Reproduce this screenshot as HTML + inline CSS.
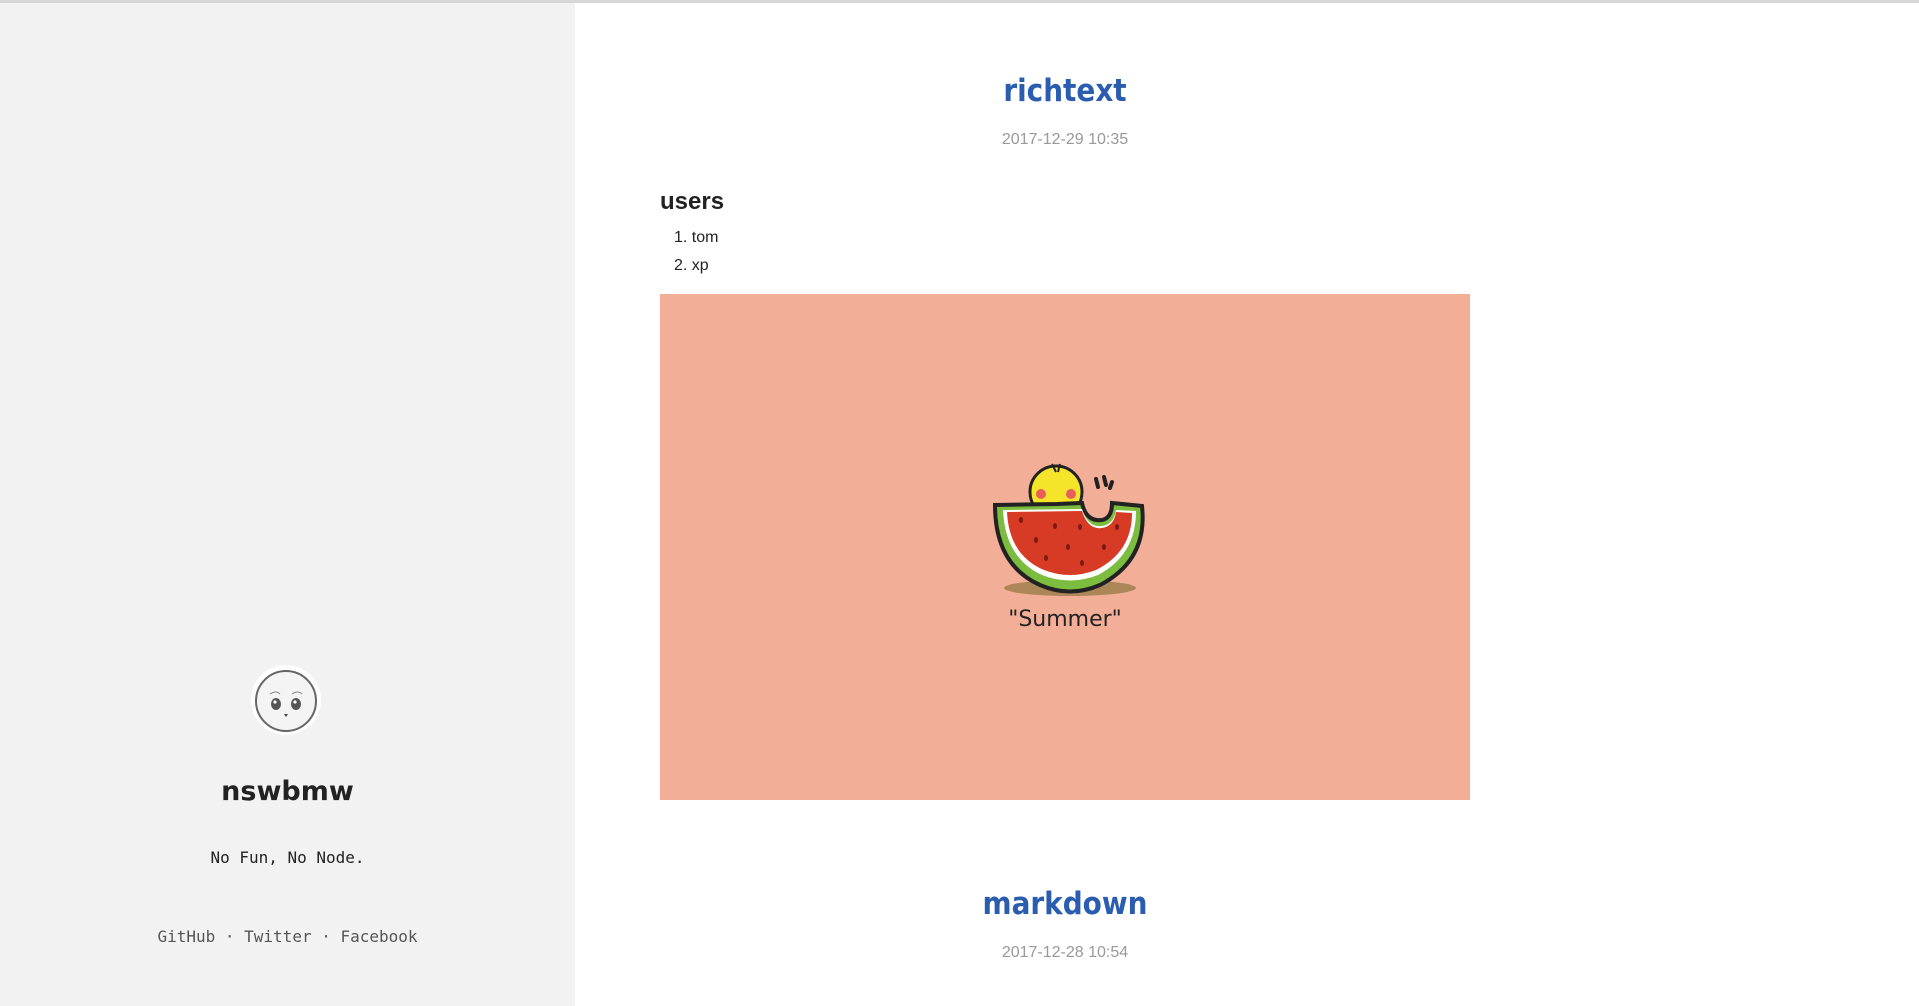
<!DOCTYPE html>
<html><head><meta charset="utf-8"><style>
html,body{margin:0;padding:0;width:1919px;height:1006px;overflow:hidden;background:#fff;font-family:"Liberation Sans",sans-serif}
.top{position:absolute;left:0;top:0;width:1919px;height:3px;background:#d6d6d6}
.side{position:absolute;left:0;top:3px;width:575px;height:1003px;background:#f2f2f2}
.c{position:absolute;left:0;width:575px;text-align:center}
.mono{font-family:"DejaVu Sans Mono","Liberation Mono",monospace}
.t{position:absolute;left:660px;width:810px;text-align:center}
a{color:#2a5db0;text-decoration:none}
</style></head><body>
<div class="top"></div>
<div class="side">
 <svg style="position:absolute;left:250px;top:661px" width="72" height="72" viewBox="0 0 72 72">
  <circle cx="36" cy="36" r="35" fill="#fff"/>
  <circle cx="36" cy="37" r="30" fill="#f4f4f4" stroke="#666" stroke-width="2"/>
  <ellipse cx="26" cy="40" rx="5" ry="6" fill="#555"/><ellipse cx="46" cy="40" rx="5" ry="6" fill="#555"/>
  <circle cx="25" cy="38" r="1.6" fill="#fff"/><circle cx="45" cy="38" r="1.6" fill="#fff"/>
  <path d="M34 50 L38 50 L36 53Z" fill="#444"/>
  <path d="M20 30 q6-4 10 0 M42 30 q6-4 10 0" stroke="#888" fill="none"/>
 </svg>
 <div class="c" style="top:773px;font-size:27px;font-weight:bold;color:#222;font-family:'DejaVu Sans',sans-serif">nswbmw</div>
 <div class="c mono" style="top:845px;font-size:16px;color:#222">No Fun, No Node.</div>
 <div class="c mono" style="top:924px;font-size:16px;color:#555">GitHub · Twitter · Facebook</div>
</div>
<div class="t" style="top:73px;font-size:31px;font-weight:bold;font-family:'DejaVu Sans Condensed','DejaVu Sans',sans-serif"><a>richtext</a></div>
<div class="t" style="top:131px;font-size:16px;color:#999">2017-12-29 10:35</div>
<div style="position:absolute;left:660px;top:188px;font-size:24px;font-weight:bold;color:#222">users</div>
<div style="position:absolute;left:674px;top:224px;font-size:16px;color:#222;line-height:28px">1. tom<br>2. xp</div>
<div style="position:absolute;left:660px;top:294px;width:810px;height:506px;background:#f3ae98">
 <svg width="810" height="506" viewBox="660 294 810 506" style="position:absolute;left:0;top:0">
  <ellipse cx="1070" cy="588" rx="66" ry="8" fill="#9a7a4a" opacity=".8"/>
  <circle cx="1056" cy="492" r="26" fill="#f5e42a" stroke="#222" stroke-width="3"/>
  <circle cx="1041" cy="494" r="5" fill="#e8605a"/><circle cx="1071" cy="494" r="5" fill="#e8605a"/>
  <path d="M1056 472 l-4-8 M1058 472 l2-8" stroke="#222" stroke-width="2"/>
  <path d="M1096 479 l2 8 M1104 477 l2 8 M1112 482 l-2 6" stroke="#222" stroke-width="4" stroke-linecap="round"/>
  <path d="M995 505 L1057 504 L1082 503 Q1086 522 1102 520 Q1112 518 1112 503 L1142 506 Q1148 560 1100 585 Q1070 598 1040 585 Q995 565 995 505Z" fill="#7cbc3f" stroke="#222" stroke-width="4"/>
  <path d="M1003 510 L1082 509 Q1088 528 1102 526 Q1114 524 1116 510 L1136 511 Q1136 555 1098 575 Q1070 586 1042 575 Q1005 558 1003 510Z" fill="#fff"/>
  <path d="M1007 512 L1082 511 Q1088 530 1102 528 Q1114 526 1116 512 L1132 513 Q1132 552 1096 570 Q1070 580 1044 570 Q1009 555 1007 512Z" fill="#d83b25"/>
  <g fill="#7a1a10"><ellipse cx="1021" cy="520" rx="2" ry="3"/><ellipse cx="1055" cy="526" rx="2" ry="3"/><ellipse cx="1080" cy="527" rx="2" ry="3"/><ellipse cx="1117" cy="527" rx="2" ry="3"/><ellipse cx="1036" cy="540" rx="2" ry="3"/><ellipse cx="1068" cy="547" rx="2" ry="3"/><ellipse cx="1104" cy="547" rx="2" ry="3"/><ellipse cx="1046" cy="558" rx="2" ry="3"/><ellipse cx="1082" cy="563" rx="2" ry="3"/></g>
 </svg>
 <div style="position:absolute;left:0;width:810px;text-align:center;top:313px;font-size:22px;color:#222;font-family:'DejaVu Sans',sans-serif">"Summer"</div>
</div>
<div class="t" style="top:886px;font-size:31px;font-weight:bold;font-family:'DejaVu Sans Condensed','DejaVu Sans',sans-serif"><a>markdown</a></div>
<div class="t" style="top:944px;font-size:16px;color:#999">2017-12-28 10:54</div>
</body></html>
